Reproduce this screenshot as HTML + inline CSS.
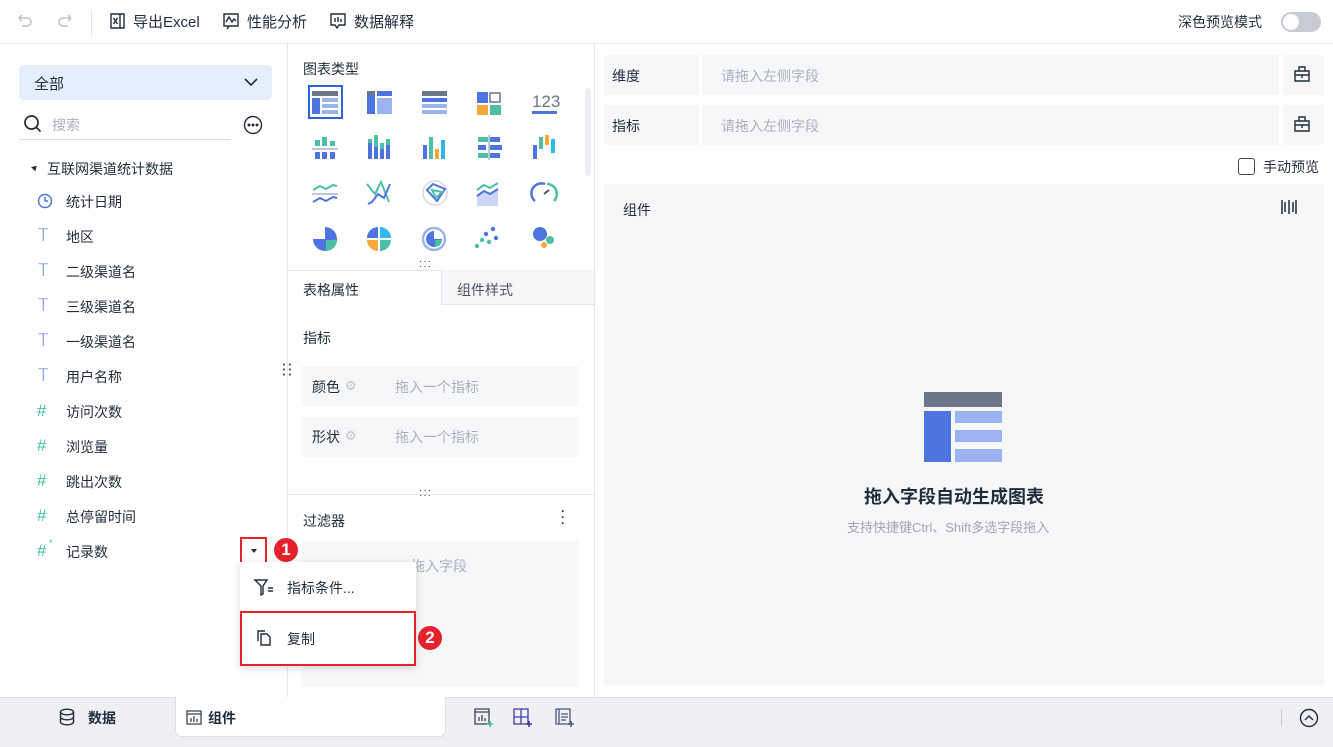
<!DOCTYPE html>
<html><head><meta charset="utf-8">
<style>
*{box-sizing:border-box;margin:0;padding:0}
body{width:1333px;height:747px;overflow:hidden;background:#fff;font-family:"Liberation Sans","Noto Sans CJK SC",sans-serif;color:#1f2d3d;font-size:14px;position:relative}
.a{position:absolute}
.t{white-space:nowrap}
.g{color:#a9b0bd}
.z{z-index:20}
.T{font-size:17px;color:#4e74e0;font-family:"DejaVu Sans","Liberation Sans",sans-serif;font-weight:200}
</style></head><body>
<!-- top bar -->
<div class="a" style="left:0;top:0;width:1333px;height:44px;border-bottom:1px solid #e3e6ea"></div>
<svg class="a" style="left:15px;top:11px" width="20" height="20" viewBox="0 0 20 20" fill="none" stroke="#c0c5cc" stroke-width="1.6"><path d="M4 7h8a4 4 0 010 8H7M4 7l3-3M4 7l3 3"/></svg>
<svg class="a" style="left:55px;top:11px" width="20" height="20" viewBox="0 0 20 20" fill="none" stroke="#c0c5cc" stroke-width="1.6"><path d="M16 7H8a4 4 0 000 8h5M16 7l-3-3M16 7l-3 3"/></svg>
<div class="a" style="left:91px;top:10px;width:1px;height:26px;background:#e3e6ea"></div>
<svg class="a" style="left:109px;top:12px" width="18" height="18" viewBox="0 0 18 18" fill="none" stroke="#1f2d3d" stroke-width="1.4"><path d="M2 2h9v14H2zM11 2h4v14h-4M4.5 6l4 6M8.5 6l-4 6"/></svg>
<div class="a t" style="left:133px;top:11px;font-size:15px">导出Excel</div>
<svg class="a" style="left:222px;top:12px" width="18" height="18" viewBox="0 0 18 18" fill="none" stroke="#1f2d3d" stroke-width="1.4"><path d="M2 2h14v12H2zM4 10l3-5 3 5 2-3 2 2M7 14l-2 3"/></svg>
<div class="a t" style="left:247px;top:11px;font-size:15px">性能分析</div>
<svg class="a" style="left:329px;top:12px" width="18" height="18" viewBox="0 0 18 18" fill="none" stroke="#1f2d3d" stroke-width="1.4"><path d="M2 2h14v11H10l-2 3-2-3H2zM6 6v4M9 5v5M12 7v3"/></svg>
<div class="a t" style="left:354px;top:11px;font-size:15px">数据解释</div>
<div class="a t" style="left:1178px;top:12px;font-size:14px">深色预览模式</div>
<div class="a" style="left:1281px;top:12px;width:40px;height:20px;border-radius:10px;background:#c7ccd3"></div>
<div class="a" style="left:1283px;top:14px;width:16px;height:16px;border-radius:8px;background:#fff"></div>

<!-- left panel -->
<div class="a" style="left:287px;top:44px;width:1px;height:653px;background:#e3e6ea"></div>
<div class="a" style="left:19px;top:65px;width:253px;height:35px;border-radius:5px;background:#e5eefb"></div>
<div class="a t" style="left:34px;top:73px;font-size:15px">全部</div>
<svg class="a" style="left:243px;top:75px" width="16" height="14" viewBox="0 0 16 14" fill="none" stroke="#1f2d3d" stroke-width="1.6"><path d="M2 4l6 6 6-6"/></svg>
<svg class="a" style="left:23px;top:114px" width="20" height="20" viewBox="0 0 20 20" fill="none" stroke="#1f2d3d" stroke-width="1.7"><circle cx="8.5" cy="8.5" r="6.5"/><path d="M13.5 13.5l4 4"/></svg>
<div class="a t g" style="left:52px;top:115px">搜索</div>
<div class="a" style="left:19px;top:139px;width:212px;height:1px;background:#dde0e5"></div>
<svg class="a" style="left:243px;top:115px" width="20" height="20" viewBox="0 0 20 20" fill="none" stroke="#1f2d3d" stroke-width="1.4"><circle cx="10" cy="10" r="8.5"/><circle cx="6" cy="10" r=".8" fill="#1f2d3d"/><circle cx="10" cy="10" r=".8" fill="#1f2d3d"/><circle cx="14" cy="10" r=".8" fill="#1f2d3d"/></svg>
<div class="a" style="left:32px;top:165px;width:0;height:0;border-left:3px solid transparent;border-right:3px solid transparent;border-bottom:5px solid #1f2d3d;transform:rotate(45deg)"></div>
<div class="a t" style="left:47px;top:159px;font-size:14px">互联网渠道统计数据</div>

<svg class="a" style="left:37px;top:193px" width="16" height="16" viewBox="0 0 16 16" fill="none" stroke="#4e74e0" stroke-width="1.5"><circle cx="8" cy="8" r="6.5"/><path d="M8 4v4h3"/></svg>
<div class="a t" style="left:66px;top:192px">统计日期</div>
<div class="a t T" style="left:38px;top:226px">T</div><div class="a t" style="left:66px;top:227px">地区</div>
<div class="a t T" style="left:38px;top:261px">T</div><div class="a t" style="left:66px;top:262px">二级渠道名</div>
<div class="a t T" style="left:38px;top:296px">T</div><div class="a t" style="left:66px;top:297px">三级渠道名</div>
<div class="a t T" style="left:38px;top:331px">T</div><div class="a t" style="left:66px;top:332px">一级渠道名</div>
<div class="a t T" style="left:38px;top:366px">T</div><div class="a t" style="left:66px;top:367px">用户名称</div>
<div class="a t" style="left:37px;top:401px;font-size:17px;color:#3dbfa3">#</div><div class="a t" style="left:66px;top:402px">访问次数</div>
<div class="a t" style="left:37px;top:436px;font-size:17px;color:#3dbfa3">#</div><div class="a t" style="left:66px;top:437px">浏览量</div>
<div class="a t" style="left:37px;top:471px;font-size:17px;color:#3dbfa3">#</div><div class="a t" style="left:66px;top:472px">跳出次数</div>
<div class="a t" style="left:37px;top:506px;font-size:17px;color:#3dbfa3">#</div><div class="a t" style="left:66px;top:507px">总停留时间</div>
<div class="a t" style="left:37px;top:541px;font-size:17px;color:#3dbfa3">#</div><div class="a t" style="left:49px;top:538px;font-size:9px;color:#3dbfa3">*</div><div class="a t" style="left:66px;top:542px">记录数</div>
<div class="a" style="left:283px;top:362px;width:2px;height:16px;background:radial-gradient(circle,#555 1px,transparent 1.2px) 0 0/2px 5px"></div>
<div class="a" style="left:289px;top:362px;width:2px;height:16px;background:radial-gradient(circle,#555 1px,transparent 1.2px) 0 0/2px 5px"></div>

<!-- middle panel -->
<div class="a" style="left:594px;top:44px;width:1px;height:653px;background:#e3e6ea"></div>
<div class="a t" style="left:303px;top:59px;font-size:14px">图表类型</div>
<div class="a" style="left:585px;top:88px;width:6px;height:88px;border-radius:3px;background:#eceef1"></div>
<div class="a" style="left:308px;top:85px;width:35px;height:34px;border:2px solid #2f62d8"></div>
<svg class="a" style="left:312px;top:89px" width="300" height="170" viewBox="0 0 300 170">
 <rect x="0" y="2" width="26" height="5" fill="#6b7689"/><rect x="0" y="9" width="8" height="16" fill="#4e74e0"/><rect x="10" y="9" width="16" height="4" fill="#9ab4f0"/><rect x="10" y="15" width="16" height="4" fill="#9ab4f0"/><rect x="10" y="21" width="16" height="4" fill="#9ab4f0"/>
 <rect x="55" y="2" width="8" height="23" fill="#4e74e0"/><rect x="55" y="2" width="8" height="4" fill="#6b7689"/><rect x="65" y="2" width="15" height="5" fill="#4e74e0"/><rect x="65" y="9" width="15" height="16" fill="#9ab4f0"/>
 <rect x="110" y="2" width="25" height="5" fill="#6b7689"/><rect x="110" y="9" width="25" height="4" fill="#4e74e0"/><rect x="110" y="15" width="25" height="4" fill="#9ab4f0"/><rect x="110" y="21" width="25" height="4" fill="#9ab4f0"/>
 <rect x="165" y="3" width="11" height="11" fill="#4e74e0"/><rect x="178" y="4" width="10" height="9" fill="none" stroke="#6b7689" stroke-width="1.5"/><rect x="165" y="16" width="11" height="10" fill="#f5a93a"/><rect x="178" y="16" width="11" height="10" fill="#4dbfa6"/>
 <text x="220" y="18" font-family="Liberation Sans" font-size="17" fill="#6b7689">123</text><rect x="220" y="22" width="25" height="3" fill="#4e74e0"/>
 <g transform="translate(0,46)"><rect x="0" y="13" width="26" height="2" fill="#bcc6d6"/><rect x="3" y="5" width="5" height="6" fill="#4dbfa6"/><rect x="10" y="2" width="5" height="9" fill="#4dbfa6"/><rect x="18" y="6" width="5" height="5" fill="#4dbfa6"/><rect x="3" y="17" width="5" height="7" fill="#4e74e0"/><rect x="10" y="17" width="5" height="7" fill="#4e74e0"/><rect x="18" y="17" width="5" height="7" fill="#4e74e0"/>
 <rect x="56" y="8" width="4" height="16" fill="#4e74e0"/><rect x="56" y="4" width="4" height="4" fill="#4dbfa6"/><rect x="62" y="12" width="4" height="12" fill="#4e74e0"/><rect x="62" y="0" width="4" height="12" fill="#4dbfa6"/><rect x="68" y="14" width="4" height="10" fill="#4e74e0"/><rect x="68" y="8" width="4" height="6" fill="#4dbfa6"/><rect x="74" y="10" width="4" height="14" fill="#4e74e0"/><rect x="74" y="4" width="4" height="6" fill="#4dbfa6"/>
 <rect x="111" y="10" width="4" height="14" fill="#4e74e0"/><rect x="117" y="2" width="4" height="22" fill="#4dbfa6"/><rect x="123" y="14" width="4" height="10" fill="#f5a93a"/><rect x="129" y="5" width="4" height="19" fill="#2fb9e8"/>
 <rect x="166" y="2" width="10" height="5" fill="#4dbfa6"/><rect x="178" y="2" width="10" height="5" fill="#4e74e0"/><rect x="166" y="10" width="8" height="5" fill="#4e74e0"/><rect x="178" y="10" width="12" height="5" fill="#4e74e0"/><rect x="166" y="18" width="10" height="5" fill="#4dbfa6"/><rect x="178" y="18" width="10" height="5" fill="#4e74e0"/><rect x="176" y="0" width="2" height="25" fill="#bcc6d6"/>
 <rect x="221" y="10" width="4" height="14" fill="#4e74e0"/><rect x="227" y="2" width="4" height="12" fill="#4dbfa6"/><rect x="233" y="0" width="4" height="10" fill="#f5a93a"/><rect x="239" y="4" width="4" height="14" fill="#2fb9e8"/></g>
 <g transform="translate(0,91)" fill="none" stroke-width="2"><path d="M1 10l7-4 6 3 7-4 4 1" stroke="#4dbfa6"/><path d="M0 14h26" stroke="#bcc6d6"/><path d="M1 22l7-4 6 3 7-4 4 1" stroke="#4e74e0"/>
 <path d="M55 4l8 10 6-12 8 20" stroke="#4dbfa6"/><path d="M56 24l4-2 6-8 6 4 6-14" stroke="#4e74e0"/>
 <circle cx="123" cy="13" r="12" stroke="#d5dae3" stroke-width="1.5"/><path d="M115 10l6-6 12 5-8 12z" stroke="#4e74e0"/><path d="M120 10l10 2-6 6z" stroke="#4dbfa6"/>
 <path d="M165 16l7-5 6 3 8-5v17h-21z" fill="#c9d6f5" stroke="none"/><path d="M165 10l7-5 6 3 8-5" stroke="#4dbfa6"/><path d="M165 16l7-5 6 3 8-5" stroke="#4e74e0"/>
 <path d="M223 21a10 10 0 0110-17" stroke="#4e74e0" stroke-width="2.5"/><path d="M235 4a10 10 0 017 17" stroke="#4dbfa6" stroke-width="2.5"/><path d="M232 14l5-4" stroke="#555" stroke-width="2"/></g>
 <g transform="translate(0,137)"><path d="M13 13V1a12 12 0 11-12 12z" fill="#4e74e0"/><path d="M14 14h11a11 11 0 01-11 11z" fill="#4dbfa6"/>
 <path d="M66 12V1a11 11 0 00-11 11z" fill="#4e74e0"/><path d="M68 12V1a11 11 0 0111 11z" fill="#2fb9e8"/><path d="M66 14H55a11 11 0 0011 11z" fill="#f5a93a"/><path d="M68 14h11a11 11 0 01-11 11z" fill="#4dbfa6"/>
 <circle cx="122" cy="13" r="11" fill="none" stroke="#9ab4f0" stroke-width="2.5"/><path d="M122 13V5a8 8 0 108 8z" fill="#4e74e0"/><path d="M123 14h7a7 7 0 01-7 7z" fill="#4dbfa6"/>
 <circle cx="181" cy="3" r="2.2" fill="#4e74e0"/><circle cx="174" cy="8" r="2.2" fill="#4e74e0"/><circle cx="184" cy="12" r="2.2" fill="#4e74e0"/><circle cx="170" cy="14" r="2.2" fill="#4dbfa6"/><circle cx="177" cy="16" r="2.2" fill="#4dbfa6"/><circle cx="165" cy="20" r="2.2" fill="#4dbfa6"/>
 <circle cx="228" cy="8" r="7" fill="#4e74e0"/><circle cx="238" cy="14" r="4" fill="#4dbfa6"/><circle cx="232" cy="19" r="3" fill="#f5a93a"/></g>
</svg>
<div class="a t" style="left:419px;top:259px;font-size:10px;letter-spacing:1px;line-height:5px">···<br>···</div>
<div class="a" style="left:288px;top:270px;width:306px;height:1px;background:#e3e6ea"></div>
<div class="a" style="left:441px;top:270px;width:153px;height:35px;background:#f5f6f8;border-left:1px solid #e3e6ea;border-bottom:1px solid #e3e6ea"></div>
<div class="a t" style="left:303px;top:280px">表格属性</div>
<div class="a t" style="left:457px;top:280px;color:#4a5566">组件样式</div>
<div class="a t" style="left:303px;top:328px">指标</div>
<div class="a" style="left:302px;top:366px;width:276px;height:40px;background:#f6f7f9"></div>
<div class="a t" style="left:312px;top:377px">颜色</div><div class="a t" style="left:345px;top:378px;color:#c0c5cc;font-size:13px">⚙</div><div class="a t g" style="left:395px;top:377px">拖入一个指标</div>
<div class="a" style="left:302px;top:417px;width:276px;height:40px;background:#f6f7f9"></div>
<div class="a t" style="left:312px;top:427px">形状</div><div class="a t" style="left:345px;top:428px;color:#c0c5cc;font-size:13px">⚙</div><div class="a t g" style="left:395px;top:427px">拖入一个指标</div>
<div class="a t" style="left:419px;top:488px;font-size:10px;letter-spacing:1px;line-height:5px">···<br>···</div>
<div class="a" style="left:288px;top:494px;width:306px;height:1px;background:#e3e6ea"></div>
<div class="a t" style="left:303px;top:511px">过滤器</div>
<div class="a t" style="left:561px;top:508px;font-weight:bold;line-height:6px;font-size:12px">·<br>·<br>·</div>
<div class="a" style="left:302px;top:541px;width:276px;height:146px;background:#f6f7f9"></div>
<div class="a t g" style="left:411px;top:556px">拖入字段</div>

<!-- dropdown annotation (on top) -->
<div class="a z" style="left:240px;top:537px;width:27px;height:28px;border:2px solid #e5222b"></div>
<div class="a z" style="left:251px;top:549px;border-left:3px solid transparent;border-right:3px solid transparent;border-top:4px solid #1f2d3d"></div>
<div class="a z" style="left:274px;top:538px;width:24px;height:24px;border-radius:12px;background:#e5222b;color:#fff;font-size:17px;text-align:center;line-height:24px;font-weight:bold">1</div>
<div class="a z" style="left:240px;top:562px;width:176px;height:104px;background:#fff;box-shadow:0 2px 8px rgba(0,0,0,.15)"></div>
<svg class="a z" style="left:253px;top:578px" width="22" height="18" viewBox="0 0 22 18" fill="none" stroke="#1f2d3d" stroke-width="1.4"><path d="M2 2h12l-4 6v8l-2 1V8zM15 10h5M15 13h5"/></svg>
<div class="a t z" style="left:287px;top:578px">指标条件...</div>
<div class="a z" style="left:240px;top:611px;width:176px;height:55px;border:2px solid #e5222b"></div>
<svg class="a z" style="left:255px;top:629px" width="18" height="18" viewBox="0 0 18 18" fill="none" stroke="#1f2d3d" stroke-width="1.4"><path d="M3 12V2h7M6 5h6l3 3v8H6z"/></svg>
<div class="a t z" style="left:287px;top:629px">复制</div>
<div class="a z" style="left:418px;top:626px;width:24px;height:24px;border-radius:12px;background:#e5222b;color:#fff;font-size:17px;text-align:center;line-height:24px;font-weight:bold">2</div>

<!-- right panel -->
<div class="a" style="left:604px;top:55px;width:95px;height:40px;background:#f6f7f9"></div>
<div class="a" style="left:702px;top:55px;width:577px;height:40px;background:#f6f7f9"></div>
<div class="a" style="left:1283px;top:55px;width:41px;height:40px;background:#f6f7f9"></div>
<div class="a t" style="left:612px;top:66px">维度</div><div class="a t g" style="left:721px;top:66px">请拖入左侧字段</div>
<div class="a" style="left:604px;top:105px;width:95px;height:40px;background:#f6f7f9"></div>
<div class="a" style="left:702px;top:105px;width:577px;height:40px;background:#f6f7f9"></div>
<div class="a" style="left:1283px;top:105px;width:41px;height:40px;background:#f6f7f9"></div>
<div class="a t" style="left:612px;top:116px">指标</div><div class="a t g" style="left:721px;top:116px">请拖入左侧字段</div>
<svg class="a" style="left:1294px;top:66px" width="16" height="16" viewBox="0 0 16 16" fill="none" stroke="#1f2d3d" stroke-width="1.4"><path d="M5 1h6v4H5zM1 5h14v10H1zM1 9h14M8 9v3"/></svg>
<svg class="a" style="left:1294px;top:116px" width="16" height="16" viewBox="0 0 16 16" fill="none" stroke="#1f2d3d" stroke-width="1.4"><path d="M5 1h6v4H5zM1 5h14v10H1zM1 9h14M8 9v3"/></svg>
<div class="a" style="left:1238px;top:158px;width:17px;height:17px;border:1.5px solid #3a4556;border-radius:3px"></div>
<div class="a t" style="left:1263px;top:157px">手动预览</div>
<div class="a" style="left:604px;top:184px;width:720px;height:501px;background:#f6f7f9"></div>
<div class="a t" style="left:623px;top:200px">组件</div>
<svg class="a" style="left:1281px;top:199px" width="16" height="16" viewBox="0 0 16 16" stroke="#1f2d3d" stroke-width="1.5"><path d="M1 1v14M4 3v10M8 1v14M12 3v10M15 1v14"/></svg>
<svg class="a" style="left:924px;top:392px" width="78" height="70" viewBox="0 0 78 70"><rect x="0" y="0" width="78" height="15" fill="#6b7689"/><rect x="0" y="19" width="27" height="51" fill="#4e74e0"/><rect x="31" y="19" width="47" height="12" fill="#9ab4f0"/><rect x="31" y="38" width="47" height="12" fill="#9ab4f0"/><rect x="31" y="57" width="47" height="13" fill="#9ab4f0"/></svg>
<div class="a t" style="left:864px;top:483px;font-size:18px;font-weight:bold;color:#1f2d3d">拖入字段自动生成图表</div>
<div class="a t" style="left:847px;top:517px;font-size:13px;color:#a0a7b3">支持快捷键Ctrl、Shift多选字段拖入</div>

<!-- bottom bar -->
<div class="a" style="left:0;top:697px;width:1333px;height:50px;background:#eef0f4;border-top:1px solid #dde0e5"></div>
<div class="a" style="left:175px;top:697px;width:271px;height:40px;background:#fff;border-radius:0 0 6px 6px;border:1px solid #dde0e5;border-top:none"></div>
<svg class="a" style="left:59px;top:708px" width="16" height="18" viewBox="0 0 16 18" fill="none" stroke="#1f2d3d" stroke-width="1.4"><ellipse cx="8" cy="4" rx="6.5" ry="2.8"/><path d="M1.5 4v10c0 1.5 3 2.8 6.5 2.8s6.5-1.3 6.5-2.8V4M1.5 9c0 1.5 3 2.8 6.5 2.8s6.5-1.3 6.5-2.8"/></svg>
<div class="a t" style="left:88px;top:708px;font-weight:bold">数据</div>
<svg class="a" style="left:186px;top:710px" width="16" height="15" viewBox="0 0 16 15" fill="none" stroke="#3a4556" stroke-width="1.3"><path d="M1 1h14v13H1zM1 4h14M5 12V8M8 12V6M11 12V9"/></svg>
<div class="a t" style="left:208px;top:708px;font-weight:bold">组件</div>
<svg class="a" style="left:474px;top:708px" width="20" height="20" viewBox="0 0 20 20" fill="none" stroke="#3a4556" stroke-width="1.3"><path d="M1 1h14v15H1zM1 4h14M5 13V9M8 13V7M11 13V10"/><path d="M16 13v6M13 16h6" stroke="#3dbfa3" stroke-width="1.6"/></svg>
<svg class="a" style="left:513px;top:708px" width="20" height="20" viewBox="0 0 20 20" fill="none" stroke="#3d3da8" stroke-width="1.3"><path d="M1 1h14v15H1zM1 9h14M8 9v7M8 1v8h7"/><path d="M16 13v6M13 16h6" stroke-width="1.6"/></svg>
<svg class="a" style="left:555px;top:708px" width="20" height="20" viewBox="0 0 20 20" fill="none" stroke="#4a5880" stroke-width="1.3"><path d="M1 1h14v15H1zM4 1v15M6 6h7M6 9h7M6 12h5"/><path d="M16 13v6M13 16h6" stroke-width="1.6"/></svg>
<div class="a" style="left:1281px;top:709px;width:1px;height:18px;background:#c9cdd3"></div>
<svg class="a" style="left:1299px;top:708px" width="20" height="20" viewBox="0 0 20 20" fill="none" stroke="#1f2d3d" stroke-width="1.4"><circle cx="10" cy="10" r="8.5"/><path d="M6 12l4-4 4 4"/></svg>
</body></html>
